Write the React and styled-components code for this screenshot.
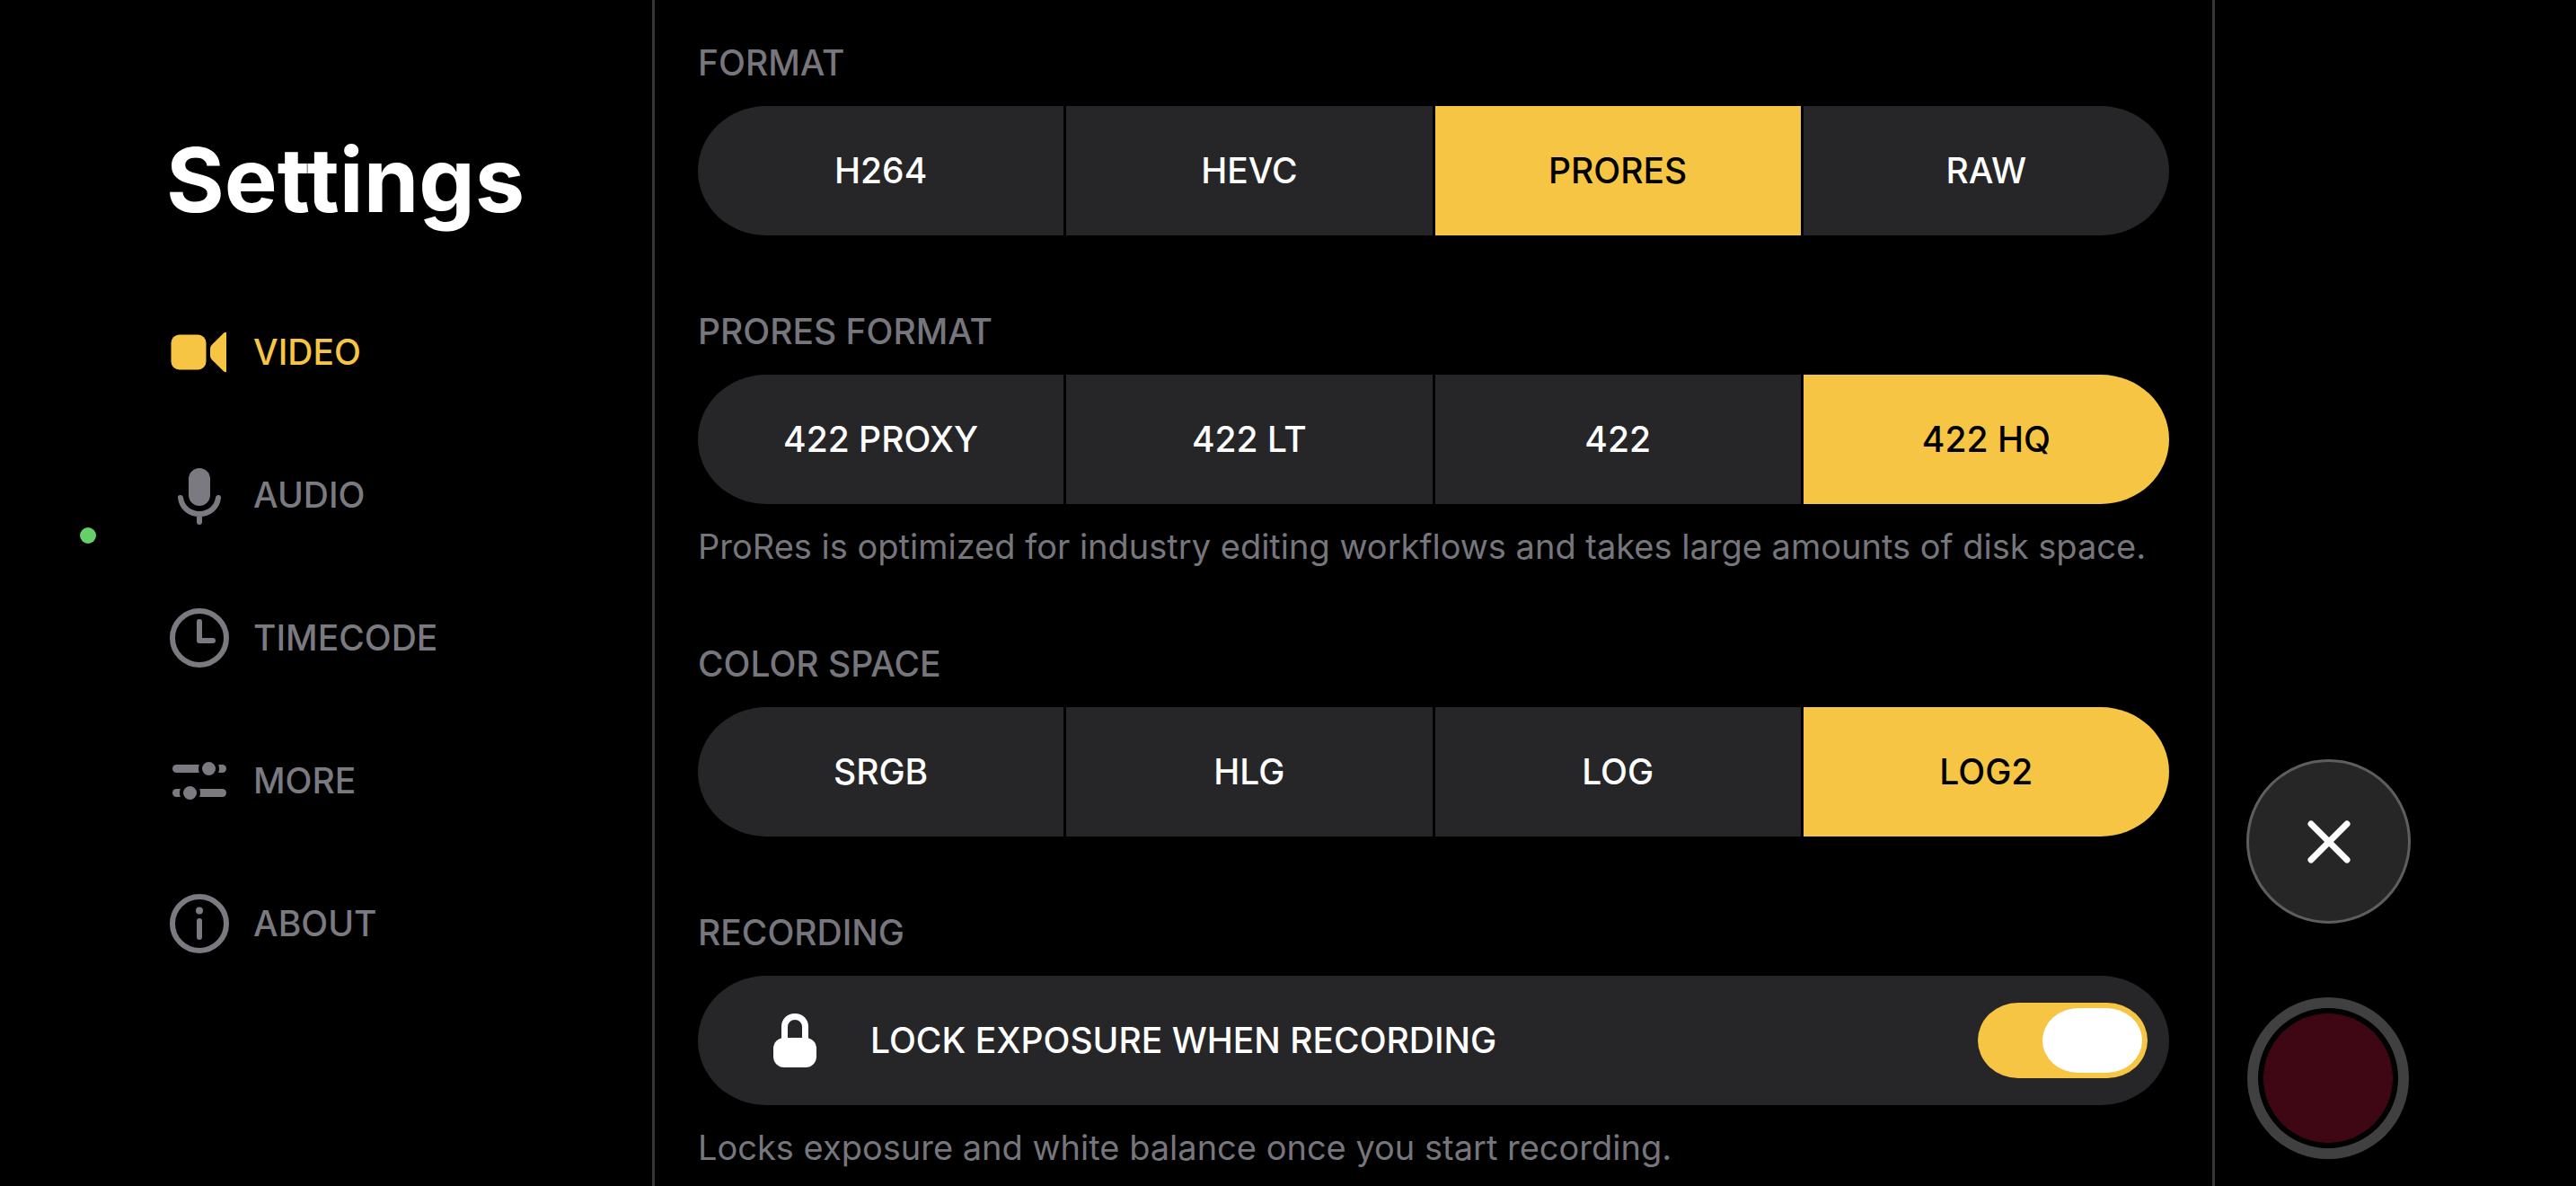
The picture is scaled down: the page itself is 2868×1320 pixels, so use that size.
import React, { useState } from "react";
import styled, { createGlobalStyle } from "styled-components";

////// STYLING ////////
const GlobalStyle = createGlobalStyle`
* {
  box-sizing: border-box;
}
body {
  margin: 0;
  background: #000000;
  color: #ffffff;
  font-family: Inter, "Liberation Sans", sans-serif;
  font-size: 39px;
  line-height: 48px;
}
button {
  font: inherit;
  color: inherit;
  border: none;
  padding: 0;
  cursor: pointer;
}
`

const Screen = styled.div`
display: flex;
min-height: 100vh;
`

// keeps the controls clear of the camera cutout
const CutoutRail = styled.div`
flex: 0 0 185px;
padding: 587px 0 0 89px;
`

const CameraDot = styled.div`
width: 18px;
height: 18px;
border-radius: 50%;
background: #65cf6a;
`

const Sidebar = styled.aside`
flex: 0 0 541px;
padding-top: 140px;
`

const Title = styled.h1`
margin: 0 0 99px;
font-size: 99px;
line-height: 120px;
font-weight: 700;
`

const Nav = styled.nav`
display: flex;
flex-direction: column;
align-items: flex-start;
gap: 93px;
padding-left: 4px;
`

const NavItem = styled.button`
display: flex;
align-items: center;
gap: 27px;
background: none;
font-weight: 500;
color: ${props => (props.$active ? "#f6c544" : "#7a7a80")};

svg {
  width: 66px;
  height: 66px;
}
`

const Content = styled.main`
flex: 1;
min-width: 0;
display: flex;
flex-direction: column;
gap: 83px;
padding: 46px 48px 19px;
border-left: 3px solid #363636;
border-right: 3px solid #363636;
`

const SectionLabel = styled.h2`
margin: 0 0 24px;
font-size: 39px;
line-height: 48px;
font-weight: 500;
color: #76767c;
`

const Segments = styled.div`
display: grid;
grid-template-columns: repeat(4, 1fr);
gap: 3px;
height: 144px;
border-radius: 76px / 72px;
overflow: hidden;
`

const Segment = styled.button`
font-weight: 500;
background: ${props => (props.$selected ? "#f6c544" : "#262628")};
color: ${props => (props.$selected ? "#000000" : "#ffffff")};
`

const Caption = styled.p`
margin: 23px 0 0;
font-size: 38px;
color: #76767c;
`

const ToggleRow = styled.label`
display: flex;
align-items: center;
height: 144px;
padding: 0 24px 0 84px;
border-radius: 76px / 72px;
background: #262628;
font-weight: 500;

svg {
  width: 48px;
  height: 60px;
  margin-right: 60px;
}
`

const Switch = styled.input`
appearance: none;
display: flex;
justify-content: ${props => (props.checked ? "flex-end" : "flex-start")};
width: 189px;
height: 84px;
margin: 0 0 0 auto;
padding: 6px;
border-radius: 45px / 42px;
background: ${props => (props.checked ? "#f6c544" : "#48484a")};
cursor: pointer;

&::before {
  content: "";
  width: 111px;
  height: 72px;
  border-radius: 40px / 36px;
  background: #ffffff;
}
`

const Actions = styled.aside`
flex: 0 0 402px;
display: flex;
flex-direction: column;
justify-content: flex-end;
gap: 82px;
padding: 0 0 30px 35px;
`

const CloseButton = styled.button`
display: flex;
align-items: center;
justify-content: center;
width: 183px;
height: 183px;
border: 3px solid #5e5e5e;
border-radius: 50%;
background: #262626;

svg {
  width: 48px;
  height: 48px;
}
`

const RecordButton = styled.button`
width: 180px;
height: 180px;
margin-left: 1px;
padding: 6px;
border: 12px solid #404040;
border-radius: 50%;
background: none;

&::before {
  content: "";
  display: block;
  height: 144px;
  border-radius: 50%;
  background: #3e0713;
}
`

////// ICONS ////////
const VideoIcon = () => (
    <svg viewBox="0 0 66 66" fill="currentColor" aria-hidden="true">
        <rect x="1.500" y="13.500" width="39" height="39" rx="9" />
        <path d="M45 29 Q45 26.500 46.800 24.700 L60 11.800 Q61.500 10.500 63 11 V55 Q61.500 55.500 60 54.200 L46.800 41.300 Q45 39.500 45 37 Z" />
    </svg>
)

const MicIcon = () => (
    <svg viewBox="0 0 66 66" fill="none" stroke="currentColor" strokeWidth="6" strokeLinecap="round" aria-hidden="true">
        <rect x="21" y="3" width="24" height="42" rx="12" fill="currentColor" stroke="none" />
        <path d="M12 36 C13.500 47 22 54 33 54 C44 54 52.500 47 54 36 M33 54 V63" />
    </svg>
)

const ClockIcon = () => (
    <svg viewBox="0 0 66 66" fill="none" stroke="currentColor" strokeWidth="6" strokeLinecap="round" strokeLinejoin="round" aria-hidden="true">
        <circle cx="33" cy="33" r="30" />
        <path d="M33 15 V36 H48" />
    </svg>
)

const SlidersIcon = () => (
    <svg viewBox="0 0 66 66" fill="currentColor" aria-hidden="true">
        <rect x="3" y="15" width="60" height="9" rx="4.5" />
        <rect x="3" y="42" width="60" height="9" rx="4.5" />
        <circle cx="43.500" cy="19.500" r="9.500" stroke="#000000" strokeWidth="4" />
        <circle cx="22.500" cy="46.500" r="9.500" stroke="#000000" strokeWidth="4" />
    </svg>
)

const InfoIcon = () => (
    <svg viewBox="0 0 66 66" fill="none" stroke="currentColor" strokeWidth="6" strokeLinecap="round" aria-hidden="true">
        <circle cx="33" cy="33" r="30" />
        <path d="M33 30 V48" />
        <circle cx="33" cy="18.500" r="4" fill="currentColor" stroke="none" />
    </svg>
)

const LockIcon = () => (
    <svg viewBox="0 0 48 60" fill="none" aria-hidden="true">
        <path d="M12.500 30 V15 C12.500 8 17.500 3.500 24 3.500 C30.500 3.500 35.500 8 35.500 15 V30" stroke="#ffffff" strokeWidth="7" />
        <rect y="27" width="48" height="33" rx="12" fill="#ffffff" />
    </svg>
)

const CloseIcon = () => (
    <svg viewBox="0 0 48 48" fill="none" stroke="#ffffff" strokeWidth="7" strokeLinecap="round" aria-hidden="true">
        <path d="M4 4 L44 44 M44 4 L4 44" />
    </svg>
)

////// DATA ////////
const tabs = [
    { name: 'VIDEO', Icon: VideoIcon },
    { name: 'AUDIO', Icon: MicIcon },
    { name: 'TIMECODE', Icon: ClockIcon },
    { name: 'MORE', Icon: SlidersIcon },
    { name: 'ABOUT', Icon: InfoIcon },
]

const groups = [
    { name: 'format', label: 'FORMAT', options: ['H264', 'HEVC', 'PRORES', 'RAW'] },
    {
        name: 'proresFormat',
        label: 'PRORES FORMAT',
        options: ['422 PROXY', '422 LT', '422', '422 HQ'],
        caption: 'ProRes is optimized for industry editing workflows and takes large amounts of disk space.',
    },
    { name: 'colorSpace', label: 'COLOR SPACE', options: ['SRGB', 'HLG', 'LOG', 'LOG2'] },
]

const initialSettings = {
    format: 'PRORES',
    proresFormat: '422 HQ',
    colorSpace: 'LOG2',
    lockExposure: true,
}

function Settings() {
    const [tab, setTab] = useState('VIDEO');
    const [settings, setSettings] = useState(initialSettings);

    const onChange = (name, value) => {
        setSettings({ ...settings, [name]: value })
    }

    return (
        <Screen>
            <CutoutRail>
                <CameraDot />
            </CutoutRail>

            <Sidebar>
                <Title>Settings</Title>
                <Nav>
                    {tabs.map(({ name, Icon }) => (
                        <NavItem key={name} $active={tab === name} onClick={() => setTab(name)}>
                            <Icon />
                            {name}
                        </NavItem>
                    ))}
                </Nav>
            </Sidebar>

            <Content>
                {groups.map(group => (
                    <section key={group.name}>
                        <SectionLabel id={group.name}>{group.label}</SectionLabel>
                        <Segments role="group" aria-labelledby={group.name}>
                            {group.options.map(option => (
                                <Segment
                                    key={option}
                                    $selected={settings[group.name] === option}
                                    aria-pressed={settings[group.name] === option}
                                    onClick={() => onChange(group.name, option)}
                                >
                                    {option}
                                </Segment>
                            ))}
                        </Segments>
                        {group.caption && <Caption>{group.caption}</Caption>}
                    </section>
                ))}

                <section>
                    <SectionLabel>RECORDING</SectionLabel>
                    <ToggleRow htmlFor="lockExposure">
                        <LockIcon />
                        LOCK EXPOSURE WHEN RECORDING
                        <Switch
                            type="checkbox"
                            id="lockExposure"
                            checked={settings.lockExposure}
                            onChange={ev => onChange('lockExposure', ev.target.checked)}
                        />
                    </ToggleRow>
                    <Caption>Locks exposure and white balance once you start recording.</Caption>
                </section>
            </Content>

            <Actions>
                <CloseButton aria-label="Close">
                    <CloseIcon />
                </CloseButton>
                <RecordButton aria-label="Record" />
            </Actions>
        </Screen>
    );
}

export default function App() {
    return (
        <>
            <GlobalStyle />
            <Settings />
        </>
    );
}
